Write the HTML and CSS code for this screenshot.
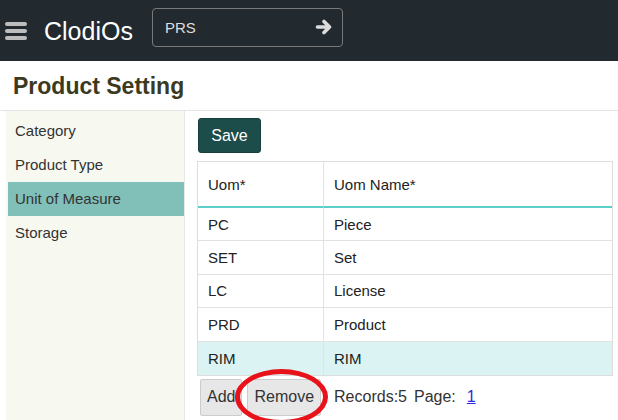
FILE: index.html
```html
<!DOCTYPE html>
<html>
<head>
<meta charset="utf-8">
<link rel="stylesheet" href="styles.css">
</head>
<body>
<header class="topbar">
  <div class="hamburger"><span></span><span></span><span></span></div>
  <div class="brand">ClodiOs</div>
  <div class="search">
    <span class="search-text">PRS</span>
    <svg class="search-go" width="18" height="16" viewBox="0 0 18 16"><path d="M2.5 8 H14.5 M9 2.5 L14.5 8 L9 13.5" fill="none" stroke="#dcdcdc" stroke-width="3.6" stroke-linecap="round" stroke-linejoin="round"/></svg>
  </div>
</header>
<div class="page-title">Product Setting</div>
<div class="main">
  <nav class="sidebar">
    <div class="nav-item">Category</div>
    <div class="nav-item">Product Type</div>
    <div class="nav-item active">Unit of Measure</div>
    <div class="nav-item">Storage</div>
  </nav>
  <section class="content">
    <button class="btn-save">Save</button>
    <table class="grid">
      <thead>
        <tr><th class="c1">Uom*</th><th>Uom Name*</th></tr>
      </thead>
      <tbody>
        <tr><td class="c1">PC</td><td>Piece</td></tr>
        <tr><td class="c1">SET</td><td>Set</td></tr>
        <tr><td class="c1">LC</td><td>License</td></tr>
        <tr><td class="c1">PRD</td><td>Product</td></tr>
        <tr class="selected"><td class="c1">RIM</td><td>RIM</td></tr>
      </tbody>
    </table>
    <div class="pager">
      <button class="btn">Add</button>
      <button class="btn">Remove</button>
      <span class="records">Records:5</span>
      <span class="page-label">Page:</span>
      <a class="page-link" href="#">1</a>
      <div class="highlight"></div>
    </div>
  </section>
</div>
</body>
</html>
```
FILE: styles.css
```css
html, body {
  margin: 0;
  padding: 0;
  background: #ffffff;
  font-family: "Liberation Sans", Arial, sans-serif;
  overflow: hidden;
}

.topbar {
  height: 61px;
  background: #222a2f;
  display: flex;
  align-items: center;
  box-sizing: border-box;
  padding-left: 5px;
}

.hamburger {
  width: 22px;
  display: flex;
  flex-direction: column;
  gap: 3.2px;
  margin-top: 1px;
}
.hamburger span {
  display: block;
  height: 3.8px;
  background: #bdbdbd;
  border-radius: 2px;
}

.brand {
  color: #ffffff;
  font-size: 25px;
  margin-left: 17px;
  margin-top: 1px;
}

.search {
  margin-left: 19px;
  margin-top: -7px;
  width: 191px;
  height: 39px;
  box-sizing: border-box;
  border: 1px solid #7a7a7a;
  border-radius: 4px;
  display: flex;
  align-items: center;
  justify-content: space-between;
  padding: 0 9px 0 12px;
}
.search-text {
  color: #dedede;
  font-size: 15px;
}
.search-go {
  display: block;
}

.page-title {
  font-size: 23px;
  font-weight: bold;
  line-height: 27px;
  color: #3b3a1f;
  padding: 12px 13px 10px;
  border-bottom: 1px solid #e4e4e4;
}

.main {
  display: flex;
  height: 309px;
}

.sidebar {
  width: 179px;
  margin-left: 6px;
  box-sizing: border-box;
  background: #f7f9f1;
  border-right: 1px solid #e6e8e2;
  padding: 3px 0 0 2px;
}
.nav-item {
  height: 34px;
  line-height: 34px;
  padding-left: 7px;
  font-size: 15px;
  color: #333333;
}
.nav-item.active {
  background: #81bfb9;
}

.content {
  flex: 1;
  padding: 7px 5px 0 12px;
  min-width: 0;
}

.btn-save {
  display: block;
  margin-left: 1px;
  width: 63px;
  height: 35px;
  background: #1d4d4a;
  color: #ffffff;
  border: 1px solid #173f3c;
  border-radius: 3px;
  font-family: inherit;
  font-size: 16px;
  padding: 0;
}

.grid {
  margin-top: 8px;
  width: 416px;
  border-collapse: separate;
  border-spacing: 0;
  border: 1px solid #dddddd;
  font-size: 15px;
  color: #222222;
}
.grid th {
  font-weight: normal;
  text-align: left;
  height: 44px;
  padding: 0 10px;
  border-bottom: 2px solid #5ccfc9;
}
.grid tbody tr {
  height: 33.4px;
}
.grid td {
  padding: 0 10px;
  border-bottom: 1px solid #e2e2e2;
}
.grid tbody tr:last-child td {
  border-bottom: none;
}
.grid .c1 {
  width: 105px;
  border-right: 1px solid #e2e2e2;
}
.grid tr.selected td {
  background: #dbf3f3;
}

.pager {
  position: relative;
  display: flex;
  align-items: center;
  margin-top: 3px;
  margin-left: 3px;
  font-size: 16px;
  color: #333333;
}
.btn {
  height: 37px;
  padding: 0 6px;
  background: #e7e7e7;
  border: 1px solid #cccccc;
  border-radius: 2px;
  font-family: inherit;
  font-size: 16px;
  color: #333333;
  margin-right: 5px;
}
.records {
  margin-left: 8px;
}
.page-label {
  margin-left: 7px;
}
.page-link {
  margin-left: 11px;
  color: #2b2bdc;
  text-decoration: underline;
}
.highlight {
  position: absolute;
  left: 35px;
  top: -10px;
  width: 93px;
  height: 56px;
  box-sizing: border-box;
  border: 5px solid #e8121b;
  border-radius: 50%;
}
```
